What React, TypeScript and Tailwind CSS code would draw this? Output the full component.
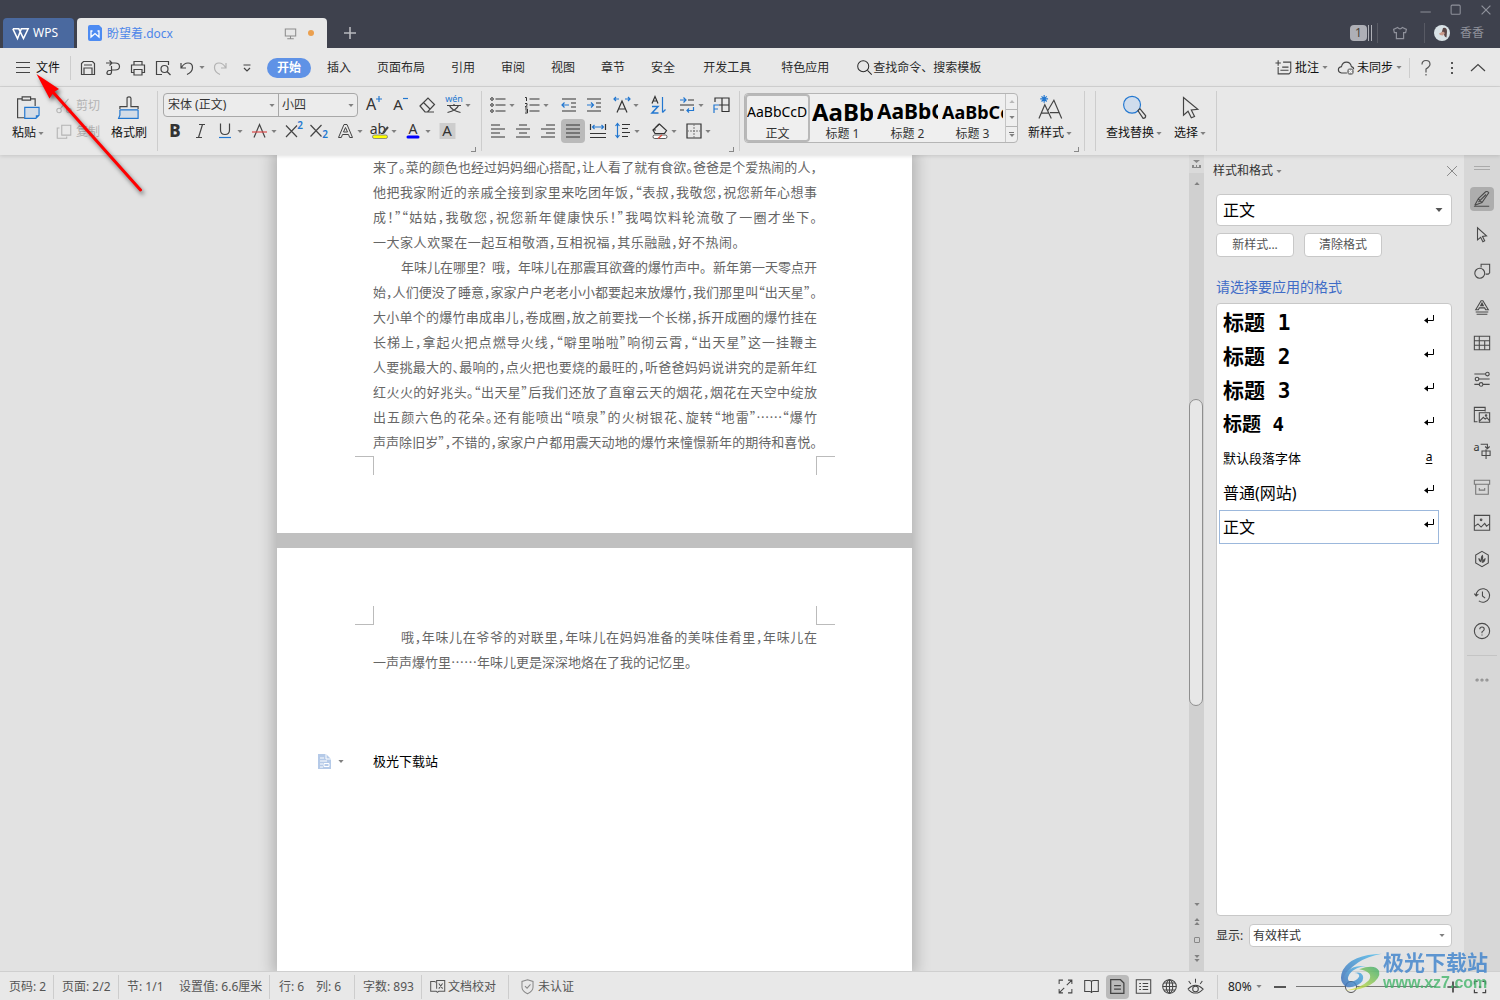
import type { ReactNode } from "react";

interface IconProps {
  children: ReactNode;
  size?: number;
  className?: string;
}

function Icon({ children, size = 20, className = "" }: IconProps) {
  return (
    <svg
      viewBox="0 0 20 20"
      width={size}
      height={size}
      fill="none"
      stroke="currentColor"
      strokeWidth={1.2}
      className={`shrink-0 overflow-visible ${className}`}
      aria-hidden="true"
    >
      {children}
    </svg>
  );
}

interface GlyphProps {
  x: number;
  y: number;
  size: number;
  children: string;
  fill?: string;
  weight?: number;
}

function Glyph({ x, y, size, children, fill = "#333", weight = 400 }: GlyphProps) {
  return (
    <text
      x={x}
      y={y}
      fontSize={size}
      fontWeight={weight}
      fontFamily="'Noto Sans','Noto Sans CJK SC',sans-serif"
      textAnchor="middle"
      fill={fill}
      stroke="none"
    >
      {children}
    </text>
  );
}

function Caret({ className = "" }: { className?: string }) {
  return (
    <svg viewBox="0 0 7 4" width="6" height="3" className={`shrink-0 ${className}`} aria-hidden="true">
      <path d="M0 0h7L3.500 4z" fill="#808080" />
    </svg>
  );
}

interface ToolProps {
  label: string;
  children: ReactNode;
  caret?: boolean;
  active?: boolean;
  className?: string;
}

function Tool({ label, children, caret = false, active = false, className = "" }: ToolProps) {
  return (
    <button type="button" aria-label={label} className={`flex h-6 shrink-0 items-center ${className}`}>
      <span className="flex h-6 w-[25px] items-center justify-center">
        <span className={`flex size-6 items-center justify-center rounded ${active ? "bg-[#bababa]" : ""}`}>
          <Icon>{children}</Icon>
        </span>
      </span>
      {caret && <Caret className="mr-1 ml-[-1px]" />}
    </button>
  );
}

function Divider({ className = "", dark = false }: { className?: string; dark?: boolean }) {
  return <span className={`w-px shrink-0 ${dark ? "bg-[#585a64]" : "bg-[#cdcdcd]"} ${className}`} />;
}

function Corner() {
  return <span className="mb-[3px] size-[5px] self-end border-r border-b border-[#888]" />;
}

const BLUE = "#2277d0";

function TitleBar() {
  return (
    <header className="flex h-12 shrink-0 justify-between bg-[#3e414d]">
      <div className="flex items-end gap-[3px] pl-[3px]">
        <button
          type="button"
          className="flex h-[30px] w-[71px] items-center gap-1 rounded-t bg-[#4a699f] pl-[9px] text-xs text-white"
        >
          <Icon size={17}>
            <path strokeWidth="1.800" d="M1 4.500h7l5.500 11.500L19 4.500h-8L6.500 16 1 4.500" />
          </Icon>
          WPS
        </button>
        <div className="flex h-[30px] w-[250px] items-center rounded-t bg-[#e8e8e8] pr-[13px] pl-[11px]">
          <svg viewBox="0 0 14 16" width="14" height="16" className="shrink-0" aria-hidden="true">
            <path d="M2 0h9l3 3v11q0 2-2 2H2q-2 0-2-2V2q0-2 2-2" fill="#4d8bf2" />
            <path d="M3 5.500V12l4-3.500L11 12V5.500M2.500 6h2M9.500 6h2" fill="none" stroke="#fff" strokeWidth="1.300" />
          </svg>
          <span className="ml-[5px] pt-px text-xs text-[#4d86e8]">盼望着.docx</span>
          <Icon size={13} className="ml-auto text-[#8c8c8c]">
            <path strokeWidth="1.600" d="M2 3h16v11H2zM10 14v4M5 18h10" />
          </Icon>
          <span className="ml-[11px] size-[6px] rounded-full bg-[#eba04f]" />
        </div>
        <button type="button" aria-label="新建" className="flex h-[30px] w-10 items-center justify-center text-[#b8b9be]">
          <Icon size={16}>
            <path strokeWidth="2" d="M10 2.500v15M2.500 10h15" />
          </Icon>
        </button>
      </div>

      <div className="flex flex-col items-end text-[#8f919b]">
        <div className="flex h-[19px] items-center gap-[15px] pr-[6px]">
          <button type="button" aria-label="最小化">
            <Icon size={16}><path d="M3 12.500h13" /></Icon>
          </button>
          <button type="button" aria-label="最大化">
            <Icon size={14}><rect x="3" y="3" width="13" height="13" rx="1.500" strokeWidth="1.500" /></Icon>
          </button>
          <button type="button" aria-label="关闭">
            <Icon size={16}><path strokeWidth="1.500" d="M4.500 4.500l11 11M15.500 4.500l-11 11" /></Icon>
          </button>
        </div>
        <div className="flex h-[27px] items-center pr-4">
          <span className="flex h-4 w-[17px] items-center justify-center rounded-sm bg-[#aeafb6] text-xs text-[#4b4236]">1</span>
          <span className="ml-px h-4 w-[4px] border-x border-[#aeafb6]" />
          <Divider dark className="ml-[5px] h-5" />
          <Icon size={16} className="ml-[14px]">
            <path strokeWidth="1.500" d="M7 3Q10 6.500 13 3l5 2.500-1 4h-2.500V17h-9V9.500H3l-1-4z" />
          </Icon>
          <Divider dark className="mr-[9px] ml-4 h-5" />
          <svg viewBox="0 0 16 16" width="16" height="16" className="shrink-0" aria-hidden="true">
            <circle cx="8" cy="8" r="8" fill="#d9e2e6" />
            <path d="M9 3q4-1 4 3.500l-.5 6Q10 12 10 8.500L7.500 8z" fill="#5b4747" />
            <path d="M5 8.500l4-2 2 1.500-2 2.500-3-.5z" fill="#c99b8c" />
          </svg>
          <span className="ml-[10px] text-xs text-[#8f919b]">香香</span>
        </div>
      </div>
    </header>
  );
}

const menuTabs = ["插入", "页面布局", "引用", "审阅", "视图", "章节", "安全"];
const wideTabs = ["开发工具", "特色应用"];

function MenuBar() {
  return (
    <nav className="flex h-[39px] shrink-0 items-center border-b border-[#d4d4d4] bg-[#e8e8e8] pt-px text-xs text-[#2b2b2b]">
      <button type="button" className="flex h-8 items-center gap-[6px] pl-4 text-[#111]">
        <svg width="14" height="12" aria-hidden="true" stroke="#444">
          <path d="M0 .5h14M0 5.500h14M0 10.500h14" />
        </svg>
        文件
      </button>
      <Divider className="mr-1 ml-[10px] h-6" />
      <div className="flex text-[#444]">
        <Tool label="保存">
          <path d="M3.500 16.500v-11l2-2h9l2 2v11zM6 16.500V10h8v6.500M6 7h8" />
        </Tool>
        <Tool label="输出为PDF">
          <path d="M3 5h6M6.500 2.500L9 5 6.500 7.500M9 5h3q4.500 0 4.500 3.500T12 12H8.500M8.500 8v6q0 2.500-2.500 2.500T4 14.500t2-2h3" />
        </Tool>
        <Tool label="打印">
          <path d="M6 7V3.500h8V7M6 14.500H3.500V7h13v7.500H14M6 11.500h8v5.500H6z" />
        </Tool>
        <Tool label="打印预览">
          <path d="M15.500 7V3.500h-12v13H9" />
          <circle cx="11.500" cy="11" r="3.500" />
          <path d="M14 13.500l3.500 3.500" />
        </Tool>
        <button type="button" aria-label="撤销" className="flex h-6 w-8 items-center pl-[2px]">
          <Icon>
            <path d="M4 5v5h5M4.500 9.500Q7 5 11 5q4.500 0 4.500 4.500T10 16.500" />
          </Icon>
          <Caret className="ml-[2px]" />
        </button>
        <Tool label="恢复" className="text-[#b2b2b2]">
          <path d="M16 5v5h-5M15.500 9.500Q13 5 9 5q-4.500 0-4.500 4.500T10 16.500" />
        </Tool>
        <Tool label="自定义快速访问工具栏" className="ml-[2px]">
          <path d="M6.500 7h7M7 10l3 3 3-3" />
        </Tool>
      </div>
      <div className="ml-2 flex items-center">
        <button type="button" className="mr-[3px] h-5 w-11 rounded-full bg-[#5f92e6] font-bold text-white">
          开始
        </button>
        {menuTabs.map((tab) => (
          <button key={tab} type="button" className="h-7 px-[13px]">
            {tab}
          </button>
        ))}
        {wideTabs.map((tab) => (
          <button key={tab} type="button" className="h-7 px-[15px]">
            {tab}
          </button>
        ))}
        <button type="button" className="ml-3 flex h-7 items-center">
          <Icon size={17}>
            <circle cx="8.500" cy="8.500" r="6.500" />
            <path d="M13.500 13.500l5 5" />
          </Icon>
          查找命令、搜索模板
        </button>
      </div>

      <div className="ml-auto flex items-center pr-[9px]">
        <button type="button" className="flex items-center text-[#111]">
          <Icon size={18} className="mr-[2px] text-[#444]">
            <path d="M3.500 1.500v6M.5 4.500h6M9 3.500h8.500v11l-2 2H3.500V9M8 9h7M6 12.500h9" />
          </Icon>
          批注
          <Caret className="mx-[3px]" />
        </button>
        <button type="button" className="ml-[6px] flex items-center text-[#111]">
          <Icon size={18} className="mr-[2px] text-[#444]">
            <path d="M11 15.500H5Q1.500 15 1.500 12T5 8.500Q6 3.500 10.500 3.500T16 8.500q2.500.5 2.500 3" />
            <circle cx="15" cy="14" r="3.800" fill="#888" stroke="none" />
            <path d="M13.500 12.500l3 3M16.500 12.500l-3 3" stroke="#fff" />
          </Icon>
          未同步
          <Caret className="mx-[3px]" />
        </button>
        <Divider className="mr-[3px] ml-1 h-5" />
        <button type="button" aria-label="帮助" className="flex w-[26px] justify-center text-[#555]">
          <Icon><path d="M6 6.500Q6 2.500 10 2.500t4 3.800Q14 8.500 10 11v3.500M10 16v1.500" /></Icon>
        </button>
        <button type="button" aria-label="更多" className="flex w-[26px] justify-center text-[#555]">
          <Icon><path strokeWidth="2" d="M10 4v2M10 9v2M10 14v2" /></Icon>
        </button>
        <button type="button" aria-label="折叠功能区" className="flex w-[26px] justify-center text-[#444]">
          <Icon><path d="M3 13l7-6.500 7 6.500" /></Icon>
        </button>
      </div>
    </nav>
  );
}

function BigTool({ label, caret = true, children }: { label: string; caret?: boolean; children: ReactNode }) {
  return (
    <button type="button" className="flex flex-col items-center gap-1 pt-2 text-xs text-[#111]">
      <Icon size={26} className="text-[#444]">{children}</Icon>
      <span className="flex h-4 items-center gap-[2px]">
        {label}
        {caret && <Caret />}
      </span>
    </button>
  );
}

function ClipboardGroup() {
  return (
    <div className="flex w-[157px] shrink-0 gap-[11px] pl-3">
      <BigTool label="粘贴">
        <path strokeWidth=".9" d="M5.500 3H2v14.500h5.500M5.500 1.500h6.500V4H5.500zM12 3h3.500v5.500" />
        <path d="M7.500 9.500h11v6l-2.500 2.500H7.500z" fill="#d3dce7" stroke={BLUE} strokeWidth=".9" />
        <path d="M16 18V15.500h2.500z" fill={BLUE} stroke="none" />
      </BigTool>
      <div className="flex flex-col gap-[2px] pt-[7px] text-xs text-[#b3b3b3]">
        <button type="button" className="flex h-6 items-center gap-[3px]">
          <Icon size={18}>
            <circle cx="4.500" cy="15" r="2.500" />
            <circle cx="15.500" cy="15" r="2.500" />
            <path d="M6 13L15 2M14 13L5 2" />
          </Icon>
          剪切
        </button>
        <button type="button" className="flex h-6 items-center gap-[3px]">
          <Icon size={18}>
            <path d="M7.500 2.500h10v11h-10zM5 5.500H2.500V17H13v-2" />
          </Icon>
          复制
        </button>
      </div>
      <BigTool label="格式刷" caret={false}>
        <path strokeWidth=".9" d="M3 11V9h5.500V2.500q0-1 1.500-1t1.500 1V9H17v2" />
        <path d="M3 11h14v6.500H2.500z" fill="#d3dce7" stroke="none" />
        <path strokeWidth=".9" stroke={BLUE} d="M3 11.500h14M3 11.500v4l-1 2.500h15v-6.500" />
      </BigTool>
    </div>
  );
}

function FontGroup() {
  return (
    <div className="flex w-[323px] shrink-0 justify-between pr-[5px] pl-[5px]">
      <div className="flex flex-col gap-[2px] pt-[6px]">
        <div className="flex items-center">
          <div className="flex h-6 w-[195px] rounded border border-[#a8a8a8] bg-[#ececec] text-xs text-[#333]">
            <div className="relative flex w-[115px] items-center border-r border-[#a8a8a8]">
              <select aria-label="字体" className="h-full w-full appearance-none pl-1">
                <option>宋体 (正文)</option>
              </select>
              <Caret className="absolute right-[3px]" />
            </div>
            <div className="relative flex flex-1 items-center">
              <select aria-label="字号" className="h-full w-full appearance-none pl-[3px]">
                <option>小四</option>
              </select>
              <Caret className="absolute right-[3px]" />
            </div>
          </div>
          <div className="flex gap-[2px] pl-[2px] text-[#444]">
            <Tool label="增大字号">
              <Glyph x={8} y={15} size={16}>A</Glyph>
              <path stroke={BLUE} d="M16 1v6M13 4h6" />
            </Tool>
            <Tool label="减小字号">
              <Glyph x={8} y={15} size={15}>A</Glyph>
              <path stroke={BLUE} d="M13 3.500h5" />
            </Tool>
            <Tool label="清除格式">
              <path d="M3 11l8-8 6.500 6.500L10.500 17H8zM6.500 7.500L13 14M9 17h8" />
            </Tool>
            <Tool label="拼音指南" caret>
              <Glyph x={10} y={7} size={9} fill={BLUE}>wén</Glyph>
              <path d="M3 10.500h14M10 9v1.500M5.500 10.500q2 5 11 7M14.500 10.500q-2 5-11 7" />
            </Tool>
          </div>
        </div>
        <div className="flex text-[#444]">
          <Tool label="加粗"><Glyph x={9} y={16} size={17} weight={800}>B</Glyph></Tool>
          <Tool label="倾斜"><path d="M8 3.500h6M5 16.500h6M11.500 3.500l-4 13" /></Tool>
          <Tool label="下划线" caret>
            <path d="M4.500 2.500v6.500q0 4.500 4.500 4.500T13.500 9V2.500" />
            <path stroke={BLUE} d="M3 16.500h12" />
          </Tool>
          <Tool label="删除线" caret>
            <path d="M4 16.500L9.500 3.500 15 16.500" />
            <path stroke="#d94a4a" d="M2 11h15" />
          </Tool>
          <Tool label="上标">
            <path d="M2 4.500l11 11.500M13 4.500L2 16" />
            <Glyph x={16} y={8} size={10} fill={BLUE} weight={600}>2</Glyph>
          </Tool>
          <Tool label="下标">
            <path d="M1.500 4l11 11.500M12.500 4L1.500 15.500" />
            <Glyph x={16} y={17} size={10} fill={BLUE} weight={600}>2</Glyph>
          </Tool>
          <Tool label="文字效果" caret className="ml-[2px]">
            <path strokeWidth="1" d="M2.500 16.500L8 3.500h3L16.500 16.500h-2.800l-1.200-3H6.500l-1.200 3zM7.500 11h4l-2-4.500z" />
          </Tool>
          <Tool label="突出显示" caret>
            <Glyph x={8} y={13} size={14}>ab</Glyph>
            <path d="M13 12l5-6" strokeWidth="2" />
            <rect x="2.500" y="14" width="15" height="3.500" rx="1.700" fill="#ff0" stroke="#777" strokeWidth=".8" />
          </Tool>
          <Tool label="字体颜色" caret>
            <Glyph x={9} y={13} size={14}>A</Glyph>
            <path stroke="#00f" strokeWidth="3" strokeLinecap="round" d="M4 16h10" />
          </Tool>
          <Tool label="字符底纹">
            <rect x="1.500" y="2" width="16" height="16" fill="#cdcdcd" stroke="none" />
            <Glyph x={9} y={15} size={15}>A</Glyph>
          </Tool>
        </div>
      </div>
      <div className="-ml-2 flex"><Corner /></div>
    </div>
  );
}

function ParagraphGroup() {
  return (
    <div className="flex w-[257px] shrink-0 justify-between pr-[5px] pl-[3px]">
      <div className="flex flex-col gap-[2px] pt-[6px] text-[#333]">
        <div className="flex">
          <Tool label="项目符号" caret>
            <circle cx="4" cy="4" r="1.300" strokeWidth="1" />
            <circle cx="4" cy="10" r="1.300" strokeWidth="1" />
            <circle cx="4" cy="16" r="1.300" strokeWidth="1" />
            <path d="M7.500 4H17.500M7.500 10H17.500M7.500 16H17.500" />
          </Tool>
          <Tool label="编号" caret>
            <path strokeWidth="1" d="M3 2.500h1.500V6M3 8.500h2v2l-2 1.500h2.500M3 14h2.500v4H3M3.500 16H5" />
            <path d="M7.500 4H17.500M7.500 10H17.500M7.500 16H17.500" />
          </Tool>
          <Tool label="减少缩进量" className="ml-[3px]">
            <path d="M3 4h14M12 8h5M12 12h5M3 16h14" />
            <path stroke={BLUE} d="M10 10H3M5.500 7.500L3 10l2.500 2.500" />
          </Tool>
          <Tool label="增加缩进量">
            <path d="M3 4h14M12 8h5M12 12h5M3 16h14" />
            <path stroke={BLUE} d="M3 10h6.500M7 7.500L9.500 10 7 12.500" />
          </Tool>
          <Tool label="中文版式" caret className="ml-[3px]">
            <path d="M5 17.500L10 6l5 11.500M6.500 14h7" />
            <path stroke={BLUE} d="M2 4h5M4 2L2 4l2 2M13 4h5M16 2l2 2-2 2" />
          </Tool>
          <Tool label="排序" className="ml-[2px]">
            <path d="M4 8.500L7 1.500l3 7M5 6h4" />
            <path stroke={BLUE} strokeWidth="1.500" d="M4 11.500h6l-6 6.500h6.500" />
            <path stroke={BLUE} d="M14.500 2v15.500M14.500 17.500l3-3" />
          </Tool>
          <Tool label="显示段落标记" caret className="ml-1">
            <path d="M3 10h14M11 5h6M3 15h4" />
            <path stroke={BLUE} d="M3 5h6M6.500 2.500L9 5 6.500 7.500M16.500 12v3.500H10M12 13.500l-2 2 2 2" />
          </Tool>
          <Tool label="制表位">
            <path d="M4 7V3h14v13.500h-7.500M11 3v13.500M8 10h10" />
            <path stroke={BLUE} d="M3 18v-8h5M3 14h4" />
          </Tool>
        </div>
        <div className="flex">
          <Tool label="左对齐"><path d="M3 4h9M3 8h14M3 12h9M3 16h14" /></Tool>
          <Tool label="居中对齐"><path d="M6 4h8M3 8h14M6 12h8M3 16h14" /></Tool>
          <Tool label="右对齐"><path d="M8 4h9M3 8h14M8 12h9M3 16h14" /></Tool>
          <Tool label="两端对齐" active><path d="M3 4h14M3 8h14M3 12h14M3 16h14" /></Tool>
          <Tool label="分散对齐">
            <path d="M2.500 3v6M17.500 3v6M2 12.500h16M2 16.500h16" />
            <path stroke={BLUE} d="M4.500 6h11M6.500 4l-2 2 2 2M13.500 4l2 2-2 2" />
          </Tool>
          <Tool label="行距" caret>
            <path d="M9 3.500h8M9 7.500h6M9 11.500h8M9 15.500h6" />
            <path stroke={BLUE} d="M4.500 2.500v14M2.500 5l2-2.500 2 2.500M2.500 14l2 2.500 2-2.500" />
          </Tool>
          <Tool label="底纹颜色" caret className="ml-[3px]">
            <path d="M3 9l6.500-6 7 6.500-2 3H5zM9 3L5.500 6.500M3 9h3" />
            <rect x="3" y="14" width="14" height="3.500" rx="1.700" fill="#fff" strokeWidth=".8" />
            <path stroke="#e04a3a" d="M8 17.500l4-3.500" />
          </Tool>
          <Tool label="边框" caret>
            <path d="M3 3h14v14H3z" />
            <path strokeWidth="1" strokeDasharray="2 1" stroke="#777" d="M10 3v14M3 10h14" />
          </Tool>
        </div>
      </div>
      <div className="-ml-2 flex"><Corner /></div>
    </div>
  );
}

const previews = [
  { label: "正文", sample: "AaBbCcD", font: "text-sm" },
  { label: "标题 1", sample: "AaBb", font: "text-2xl font-bold" },
  { label: "标题 2", sample: "AaBbC", font: "text-[21px] font-bold" },
  { label: "标题 3", sample: "AaBbCc", font: "text-lg font-bold" },
];

function StylesGroup() {
  return (
    <div className="flex w-[344px] shrink-0 pr-[5px] pl-1">
      <div className="mt-[6px] flex h-[50px] w-[274px] rounded border border-[#b5b5b5] bg-[#efefef]">
        {previews.map((style, index) => (
          <button
            key={style.label}
            type="button"
            className={`flex w-[65px] shrink-0 flex-col items-center rounded-sm border-2 text-black ${
              index === 0 ? "border-[#b8b8b8]" : "border-transparent"
            }`}
          >
            <span className={`flex h-[31px] w-full shrink-0 items-center overflow-hidden whitespace-nowrap ${style.font}`}>
              {style.sample}
            </span>
            <span className="text-xs leading-[14px] text-[#333]">{style.label}</span>
          </button>
        ))}
        <div className="flex flex-1 flex-col divide-y divide-[#b5b5b5] border-l border-[#c5c5c5]">
          <button type="button" aria-label="上一行" className="flex flex-1 items-center justify-center">
            <Caret className="rotate-180 opacity-50" />
          </button>
          <button type="button" aria-label="下一行" className="flex flex-1 items-center justify-center">
            <Caret />
          </button>
          <button type="button" aria-label="展开样式库" className="flex flex-1 flex-col items-center justify-center gap-px">
            <span className="h-px w-[5px] bg-[#777]" />
            <Caret />
          </button>
        </div>
      </div>
      <div className="ml-[10px]">
        <BigTool label="新样式">
          <path strokeWidth=".9" d="M1.500 18L6 7.500l5 10.500M3 14h6.500M8 12.500L13 4l6 14M10 13.500h7" />
          <path strokeWidth=".9" stroke={BLUE} d="M5.500 0v6M2.500 3h6M3.500 1l4 4M7.500 1l-4 4" />
        </BigTool>
      </div>
      <div className="ml-auto flex"><Corner /></div>
    </div>
  );
}

function Ribbon() {
  return (
    <div className="relative z-10 flex h-[68px] shrink-0 items-stretch bg-[#e8e8e8] shadow-[0_1px_4px_#0002]">
      <ClipboardGroup />
      <Divider className="my-1" />
      <FontGroup />
      <Divider className="my-1" />
      <ParagraphGroup />
      <Divider className="my-1" />
      <StylesGroup />
      <Divider className="my-1" />
      <Divider className="my-1 ml-[10px]" />
      <div className="flex gap-3 px-[10px]">
        <BigTool label="查找替换">
          <circle cx="8.500" cy="7.500" r="6.500" fill="#cfdcec" stroke={BLUE} strokeWidth=".9" />
          <path strokeWidth=".9" d="M13 12l1.500-1.500L19 16q0 2-2 2z" />
        </BigTool>
        <BigTool label="选择">
          <path strokeWidth=".9" d="M5 2v13.500l3.500-3 2.500 5 2.500-1-2.500-5 5-.5z" />
        </BigTool>
      </div>
      <Divider className="my-1" />
    </div>
  );
}

interface DocLine {
  text: string;
  // tight lines use half-width punctuation so that they fit the measure
  tight?: boolean;
  indent?: boolean;
  last?: boolean;
}

const firstPage: DocLine[] = [
  { text: "来了。菜的颜色也经过妈妈细心搭配，让人看了就有食欲。爸爸是个爱热闹的人，", tight: true },
  { text: "他把我家附近的亲戚全接到家里来吃团年饭，“表叔，我敬您，祝您新年心想事", tight: true },
  { text: "成！”“姑姑，我敬您，祝您新年健康快乐！”我喝饮料轮流敬了一圈才坐下。", tight: true },
  { text: "一大家人欢聚在一起互相敬酒，互相祝福，其乐融融，好不热闹。", tight: true, last: true },
  { text: "年味儿在哪里？哦，年味儿在那震耳欲聋的爆竹声中。新年第一天零点开", indent: true },
  { text: "始，人们便没了睡意，家家户户老老小小都要起来放爆竹，我们那里叫“出天星”。", tight: true },
  { text: "大小单个的爆竹串成串儿，卷成圈，放之前要找一个长梯，拆开成圈的爆竹挂在", tight: true },
  { text: "长梯上，拿起火把点燃导火线，“噼里啪啦”响彻云霄，“出天星”这一挂鞭主", tight: true },
  { text: "人要挑最大的、最响的，点火把也要烧的最旺的，听爸爸妈妈说讲究的是新年红", tight: true },
  { text: "红火火的好兆头。“出天星”后我们还放了直窜云天的烟花，烟花在天空中绽放", tight: true },
  { text: "出五颜六色的花朵。还有能喷出“喷泉”的火树银花、旋转“地雷”……“爆竹", tight: true },
  { text: "声声除旧岁”，不错的，家家户户都用震天动地的爆竹来憧憬新年的期待和喜悦。", tight: true },
];

const secondPage: DocLine[] = [
  { text: "哦，年味儿在爷爷的对联里，年味儿在妈妈准备的美味佳肴里，年味儿在", indent: true, tight: true },
];

function DocText({ lines }: { lines: DocLine[] }) {
  return (
    <>
      {lines.map((line) => (
        <p
          key={line.text}
          className={`h-[25px] whitespace-nowrap [text-align-last:justify] ${
            line.tight ? "[font-feature-settings:'halt']" : ""
          } ${line.indent ? "pl-7" : ""} ${line.last ? "w-[366px]" : ""}`}
        >
          {line.text}
        </p>
      ))}
    </>
  );
}

const docFont =
  "-mt-px pr-[95px] pl-[96px] text-[13px] leading-[25px] text-[#666] font-['Noto_Sans_CJK_SC',sans-serif]";

function DocumentArea() {
  return (
    <main className="flex min-w-0 flex-1 justify-center overflow-hidden bg-[#e2e2e2]">
      <div className="flex w-[635px] shrink-0 flex-col gap-[15px] bg-[#c0c0c0] shadow-[0_0_14px_4px_#00000038]">
        <article className="flex h-[378px] shrink-0 flex-col bg-white">
          <div className={docFont}>
            <DocText lines={firstPage} />
          </div>
          <div className="mt-[2px] flex justify-between pr-[77px] pl-[78px]">
            <span className="size-[19px] border-t border-r border-[#bbb]" />
            <span className="size-[19px] border-t border-l border-[#bbb]" />
          </div>
        </article>
        <article className="flex-1 bg-white pt-[58px]">
          <div className="flex justify-between pr-[77px] pl-[78px]">
            <span className="size-[19px] border-r border-b border-[#bbb]" />
            <span className="size-[19px] border-b border-l border-[#bbb]" />
          </div>
          <div className={docFont}>
            <div className="-mt-px">
              <DocText lines={secondPage} />
            </div>
            <p className="w-[318px] whitespace-nowrap [text-align-last:justify] [font-feature-settings:'halt']">
              一声声爆竹里……年味儿更是深深地烙在了我的记忆里。
            </p>
          </div>
          <div className="mt-[75px] flex h-[25px] items-center pl-[41px] text-[13px] text-black">
            <button type="button" aria-label="段落布局" className="flex w-[55px] items-center gap-[7px]">
              <svg viewBox="0 0 13 15" width="13" height="15" aria-hidden="true">
                <path d="M0 0h8l5 5v10H0z" fill="#b5cae8" />
                <path d="M8 0v5h5M2 4h4M2 7h7M2 10h3M6 9.500h5v3H6zM2 13h3" fill="none" stroke="#fff" />
              </svg>
              <Caret />
            </button>
            极光下载站
          </div>
        </article>
      </div>
    </main>
  );
}

function ScrollBar() {
  return (
    <div className="flex w-[15px] shrink-0 flex-col items-center bg-[#d0d0d0] pb-[9px]">
      <button type="button" aria-label="标尺" className="flex h-[18px] w-full items-center justify-center bg-[#dadada] text-[#888]">
        <svg width="9" height="8" aria-hidden="true" fill="currentColor">
          <path d="M1 0h7L4.500 3zM0 5h2v2h5V5h2v3H0zM4 5h1v2H4z" />
        </svg>
      </button>
      <button type="button" aria-label="向上滚动" className="flex h-5 items-center">
        <Caret className="rotate-180" />
      </button>
      <div className="flex w-full flex-1 flex-col">
        <div className="flex-[207]" />
        <div className="h-[307px] w-[14px] rounded-full border border-[#8f8f8f] bg-[#e7e7e7]" />
        <div className="flex-[197]" />
      </div>
      <div className="flex flex-col items-center gap-3">
        <button type="button" aria-label="向下滚动"><Caret /></button>
        <button type="button" aria-label="上一页" className="flex flex-col gap-px">
          <Caret className="rotate-180" />
          <Caret className="rotate-180" />
        </button>
        <button type="button" aria-label="选择浏览对象" className="size-[6px] rounded-[1px] border border-[#888]" />
        <button type="button" aria-label="下一页" className="flex flex-col gap-px">
          <Caret />
          <Caret />
        </button>
      </div>
    </div>
  );
}

const monoHeading = "font-['DejaVu_Sans_Mono','Noto_Sans_CJK_SC',monospace] font-bold";

const styleItems = [
  { name: "标题 1", font: `text-[21px] ${monoHeading}` },
  { name: "标题 2", font: `text-[21px] ${monoHeading}` },
  { name: "标题 3", font: `text-[21px] ${monoHeading}` },
  { name: "标题 4", font: `text-[19px] ${monoHeading}` },
  { name: "默认段落字体", font: "text-[13px]", character: true },
  { name: "普通(网站)", font: "text-base" },
  { name: "正文", font: "text-base", selected: true },
];

function StylesPanel() {
  return (
    <aside className="flex w-[260px] shrink-0 flex-col bg-[#e4e4e4] pr-3 pb-6 pl-3 text-xs text-[#333]">
      <div className="flex h-8 shrink-0 items-center">
        <button type="button" className="-ml-[3px] flex items-center gap-[3px]">
          样式和格式
          <Caret />
        </button>
        <button type="button" aria-label="关闭" className="-mr-[7px] ml-auto text-[#777]">
          <Icon size={14}><path d="M3 3l14 14M17 3L3 17" /></Icon>
        </button>
      </div>
      <div className="relative mt-[7px] flex h-8 shrink-0 items-center rounded-sm border border-[#c8c8c8] bg-white text-base text-black">
        <select aria-label="当前样式" className="h-full w-full appearance-none pl-[6px]">
          <option>正文</option>
        </select>
        <svg viewBox="0 0 7 4" width="8" height="4" className="absolute right-2" aria-hidden="true">
          <path d="M0 0h7L3.500 4z" fill="#555" />
        </svg>
      </div>
      <div className="mt-[7px] flex gap-[10px] text-[#555]">
        <button type="button" className="h-6 w-[78px] rounded-sm border border-[#c8c8c8] bg-white">新样式...</button>
        <button type="button" className="h-6 w-[78px] rounded-sm border border-[#c8c8c8] bg-white">清除格式</button>
      </div>
      <h2 className="mt-5 text-sm leading-5 text-[#3f6cc7]">请选择要应用的格式</h2>
      <ul className="mt-[6px] flex-1 rounded-sm border border-[#c8c8c8] bg-white pt-[2px] pr-3 pl-[2px] text-black">
        {styleItems.map((item) => (
          <li key={item.name}>
            <button
              type="button"
              className={`flex h-[34px] w-full items-center justify-between border pr-1 pl-[3px] ${
                item.selected ? "border-[#9cb8dc]" : "border-transparent"
              }`}
            >
              <span className={`whitespace-nowrap ${item.font}`}>{item.name}</span>
              {item.character ? (
                <span className="mb-1 w-[10px] text-center text-xs leading-4 underline underline-offset-2">a</span>
              ) : (
                <svg width="10" height="9" className="mb-2" fill="none" stroke="#000" aria-hidden="true">
                  <path d="M9.500 0v5.500H1" />
                  <path d="M4 2.500v6L0 5.500z" fill="#000" stroke="none" />
                </svg>
              )}
            </button>
          </li>
        ))}
      </ul>
      <div className="mt-2 flex h-[23px] shrink-0 items-center gap-[5px]">
        <label htmlFor="style-filter" className="w-7 whitespace-nowrap">显示:</label>
        <div className="relative flex h-full flex-1 items-center rounded border border-[#c8c8c8] bg-white">
          <select id="style-filter" className="h-full w-full appearance-none pl-[3px]">
            <option>有效样式</option>
          </select>
          <Caret className="absolute right-[6px]" />
        </div>
      </div>
    </aside>
  );
}

const railIcons: { label: string; active?: boolean; art: ReactNode }[] = [
  { label: "样式和格式", active: true, art: <path d="M1 18h17M2 17l4-7.500 8-7.500q2-1 3.500 1L10 14 2 17M6 10l4 4M6 13.500l8.500-8.500" /> },
  { label: "选择", art: <path d="M5 2v13.500l3.500-3 2.500 5 2-1-2.500-5 4.500-.5z" /> },
  { label: "形状", art: <><circle cx="7.500" cy="12.500" r="5.500" /><path d="M9 6V2.500h9.500v9.500L17 13.500h-3" /></> },
  { label: "艺术字", art: <path d="M3 13L9 3h2l6 10h-3l-1-2H7l-1 2zM8.500 8.500h3L10 5.500zM3 15.500h14M4 18h12" /> },
  { label: "表格", art: <path d="M1.500 2.500h17v15h-17zM1.500 7.500h17M1.500 12.500h17M7 2.500v15M13 7.500V17.500" /> },
  { label: "设置", art: <><circle cx="16" cy="4.500" r="2" /><circle cx="4.500" cy="10" r="2" /><circle cx="9" cy="16" r="2" /><path d="M1.500 4.500H14M6.500 10h12M1.500 16h5.500M11 16h7.500" /></> },
  { label: "素材", art: <><path d="M5 17.500H1.500v-16h12V6M1.500 5h12M7 7.500h11.500v10.500H7zM7.500 16.500l4-4 2 2 2-1.500 2.500 3" /><circle cx="14.500" cy="10.500" r=".8" /></> },
  { label: "翻译", art: <><Glyph x={4} y={10} size={12}>a</Glyph><path d="M8.500 2.500H16V7M13.500 5L16 7.500l2.500-2.500M10 10h9v5h-9zM14.500 8v11" /></> },
  { label: "存档", art: <path stroke="#777" d="M1.500 2.500h17v4.500h-17zM3 7v11h14V7M7 11v2.500h6V11" /> },
  { label: "图片", art: <><path d="M1.500 1.500h17v16.500h-17zM1.500 14l4-3 3.500 3.500 4-4 2 3 3.500-2.500" /><circle cx="9" cy="6.500" r=".9" /></> },
  { label: "推荐", art: <><path d="M10 1.500l7 4v9l-7 4-7-4v-9z" /><path fill="currentColor" stroke="none" d="M10.500 5q2 2.500-.5 8-3-4 .5-8M14 9q0 5-4 5.500 0-4 4-5.500M6 9q3 1 3.500 5Q6 13 6 9" /></> },
  { label: "历史版本", art: <path d="M3.500 11a7.500 7.500 0 1 1 3 5.500M1.500 8.500L3.500 11l2.500-2M10.500 6v5l3 2.500" /> },
  { label: "帮助中心", art: <><circle cx="10" cy="10" r="8.500" /><path d="M7.500 8q0-2.500 2.500-2.500T12.500 8Q12.500 9.500 10 11v1.500M10 13.800V15" /></> },
];

function SideRail() {
  return (
    <aside className="flex w-9 shrink-0 flex-col items-center bg-[#d7d7d7] pr-px text-[#4a4a4a]">
      <div className="flex h-[26px] items-center">
        <span className="h-1 w-4 border-y border-[#aaa]" />
      </div>
      {railIcons.map((item) => (
        <button key={item.label} type="button" aria-label={item.label} className="flex h-9 items-center justify-center">
          <span className={`flex size-6 items-center justify-center rounded ${item.active ? "bg-[#adadad]" : ""}`}>
            <Icon size={18}>{item.art}</Icon>
          </span>
        </button>
      ))}
      <span className="mt-[6px] h-px w-[30px] bg-[#c4c4c4]" />
      <button type="button" aria-label="更多" className="mt-[15px] text-[#888]">
        <Icon size={18}>
          <circle cx="4.500" cy="10" r="1.200" />
          <circle cx="10" cy="10" r="1.200" />
          <circle cx="15.500" cy="10" r="1.200" />
        </Icon>
      </button>
    </aside>
  );
}

const viewModes: { label: string; active?: boolean; art: ReactNode }[] = [
  { label: "全屏显示", art: <path d="M2.500 7V2.500H7M13 2.500h4.500V7M17.500 13v4.500H13M7 17.500H2.500V13M11.500 8.500l6-6M8.500 11.500l-6 6" /> },
  { label: "阅读版式", art: <path d="M10 4Q9 3 7.500 3H2v13h6q2 0 2 1.500M10 4q1-1 2.500-1H18v13h-6q-2 0-2 1.500V4" /> },
  { label: "页面视图", active: true, art: <path strokeWidth="1.500" d="M2 2h11.500l4 4v12H2zM6 9h8M6 13h8" /> },
  { label: "大纲", art: <path d="M1.500 2h17v16h-17zM5 6.500h2M9 6.500h6.500M5 10h2M9 10h6.500M5 13.500h2M9 13.500h6.500" /> },
  { label: "Web版式", art: <><circle cx="10" cy="10" r="8" /><ellipse cx="10" cy="10" rx="3.800" ry="8" /><path d="M2 10h16M3.500 6h13M3.500 14h13M10 2v16" /></> },
  { label: "护眼模式", art: <><path d="M1 13Q10 4 19 13 10 22.500 1 13M10 1v4.500M2 3.500l2.500 3.500M18 3.500L15.500 7" /><circle cx="10" cy="13" r="3.300" /></> },
];

function StatusBar() {
  return (
    <footer className="flex h-[29px] shrink-0 items-center border-t border-[#cfcfcf] bg-[#e8e8e8] pt-px text-xs whitespace-nowrap text-[#555]">
      <div className="flex items-center pl-[9px]">
        <span className="w-[44px]">页码: 2</span>
        <Divider className="mr-2 h-6" />
        <span className="w-[56px]">页面: 2/2</span>
        <Divider className="mr-2 h-6" />
        <span className="w-[52px]">节: 1/1</span>
        <span className="w-[90px]">设置值: 6.6厘米</span>
        <Divider className="mr-[9px] h-6" />
        <span className="w-[37px]">行: 6</span>
        <span className="w-[38px]">列: 6</span>
        <Divider className="mr-2 h-6" />
        <span className="w-[58px]">字数: 893</span>
        <Divider className="mr-[7px] h-6" />
        <button type="button" className="flex w-[79px] items-center gap-[2px]">
          <Icon size={17}>
            <path d="M10 17l-1.500-1.500H2V4h4.500L8 5M10 17l1.500-1.500h7V3H9v9.500M11.500 6.500l4.500 6M16 6.500l-4.500 6" />
          </Icon>
          文档校对
        </button>
        <Divider className="mr-[10px] h-6" />
        <button type="button" className="flex items-center gap-[2px]">
          <Icon size={17} className="text-[#888]">
            <path d="M10 2l6.500 2v7q0 4.500-6.500 7.500Q3.500 15.500 3.500 11V4zM7 9.500l2.500 2.500 4-4.500" />
          </Icon>
          未认证
        </button>
      </div>

      <div className="ml-auto flex items-center pr-3 text-[#444]">
        {viewModes.map((mode) => (
          <button key={mode.label} type="button" aria-label={mode.label} className="flex h-6 w-[26px] items-center justify-center">
            <span className={`flex h-6 w-[23px] items-center justify-center rounded ${mode.active ? "bg-[#bababa]" : ""}`}>
              <Icon size={17}>{mode.art}</Icon>
            </span>
          </button>
        ))}
        <Divider className="mr-[10px] ml-[9px] h-6" />
        <button type="button" className="flex w-[40px] items-center gap-1 text-[#222]">
          80%
          <Caret />
        </button>
        <button type="button" aria-label="缩小" className="ml-[6px] h-[2px] w-3 bg-[#555]" />
        <input
          type="range"
          aria-label="显示比例"
          min={0}
          max={100}
          defaultValue={38}
          className="mx-[10px] h-px w-[140px] appearance-none bg-[#777] [&::-webkit-slider-thumb]:size-3 [&::-webkit-slider-thumb]:appearance-none [&::-webkit-slider-thumb]:rounded-full [&::-webkit-slider-thumb]:border [&::-webkit-slider-thumb]:border-[#555] [&::-webkit-slider-thumb]:bg-[#ececec]"
        />
        <button type="button" aria-label="放大">
          <Icon size={14}><path strokeWidth="2.400" d="M10 2v16M2 10h16" /></Icon>
        </button>
        <button type="button" aria-label="适合窗口" className="ml-3">
          <Icon size={16}>
            <path strokeWidth="1.500" d="M3 7V3h4M13 3h4v4M17 13v4h-4M7 17H3v-4" />
            <circle cx="10" cy="10" r="1" fill="currentColor" />
          </Icon>
        </button>
      </div>
    </footer>
  );
}

function Watermark() {
  return (
    <div className="pointer-events-none absolute right-[11px] bottom-[7px] z-20 flex items-center gap-px opacity-80">
      <svg viewBox="0 0 44 40" width="42" height="40" aria-hidden="true">
        <defs>
          <linearGradient id="swirl-blue" x1="0" y1="1" x2="1" y2="0">
            <stop offset="0" stopColor="#3567b5" />
            <stop offset="1" stopColor="#4fc0ef" />
          </linearGradient>
          <linearGradient id="swirl-green" x1="0" y1="1" x2="1" y2="0">
            <stop offset="0" stopColor="#f2ea3c" />
            <stop offset="1" stopColor="#38ac6a" />
          </linearGradient>
        </defs>
        <path d="M44 1Q12 2 3 18-1 27 3 32 5 19 19 10 29 4 44 1" fill="url(#swirl-blue)" />
        <path d="M3 32q4 7 15 2 8-4 6-10-2-5-9-3 6 0 5 4-3 5-9 5-5-1-1-8 7-8 17-8Q14 12 7 20q-5 7-4 12" fill="url(#swirl-blue)" />
        <path d="M20 17q17-6 21 2 2 8-10 15-12 6-25 5 16-2 24-10 6-9-10-12" fill="url(#swirl-green)" />
      </svg>
      <div className="flex w-[106px] flex-col">
        <span className="text-[21px] leading-[22px] font-bold whitespace-nowrap text-[#3c82cc]">极光下载站</span>
        <span className="text-base leading-5 font-bold whitespace-nowrap text-[#45b56c] font-['Liberation_Sans',sans-serif]">
          www.xz7.com
        </span>
      </div>
    </div>
  );
}

function PointerArrow() {
  return (
    <svg
      width="120"
      height="130"
      viewBox="30 70 120 130"
      className="pointer-events-none absolute top-[70px] left-[30px] z-20 drop-shadow-[2px_3px_2px_#0008]"
      aria-hidden="true"
    >
      <path d="M52 91L140.500 190" stroke="#f00" strokeWidth="3" strokeLinecap="round" />
      <path d="M36.500 74L59 89l-5 3-4.500 6.500z" fill="#f00" />
    </svg>
  );
}

export default function App() {
  return (
    <div className="relative flex h-screen flex-col overflow-hidden font-['Noto_Sans','Noto_Sans_CJK_SC',sans-serif]">
      <TitleBar />
      <MenuBar />
      <Ribbon />
      <div className="flex min-h-0 flex-1">
        <DocumentArea />
        <ScrollBar />
        <StylesPanel />
        <SideRail />
      </div>
      <StatusBar />
      <Watermark />
      <PointerArrow />
    </div>
  );
}
